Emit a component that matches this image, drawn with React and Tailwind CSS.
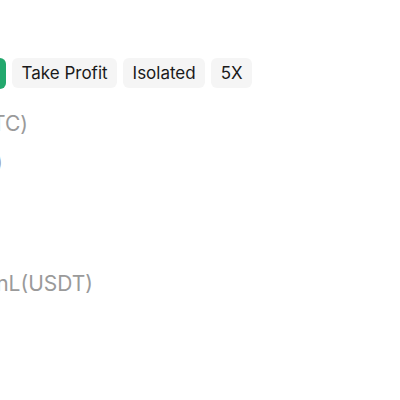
export default function App() {
  const chips = ['Take Profit', 'Isolated', '5X']

  return (
    <div className="w-[400px] h-[400px] overflow-hidden bg-white font-['Inter','Liberation_Sans',sans-serif]">
      {/* order type chips */}
      <div className="flex gap-[6px] pt-[58px] -ml-[94px]">
        <div className="w-[100px] h-[31px] rounded-[6px] bg-[#22a86d] text-white text-[17px] flex items-center justify-center whitespace-nowrap">
          Stop Limit
        </div>
        {chips.map((c) => (
          <div
            key={c}
            className="h-[30px] px-[9.5px] pt-[1px] rounded-[6px] bg-[#f5f5f5] text-[#1a1a1a] text-[17px] flex items-center whitespace-nowrap"
          >
            {c}
          </div>
        ))}
      </div>

      {/* field labels */}
      <div className="flex flex-col text-[21px] leading-[30px] text-[#9a9a9a] whitespace-nowrap">
        <div className="w-[200px] -ml-[172px] mt-[20px] text-right">Amount(BTC)</div>
        <div className="w-[200px] -ml-[197px] mt-[8px] text-right">Price(USDT)</div>
        <div className="w-[200px] -ml-[107px] mt-[92px] text-right">Est. PnL(USDT)</div>
      </div>
    </div>
  )
}
